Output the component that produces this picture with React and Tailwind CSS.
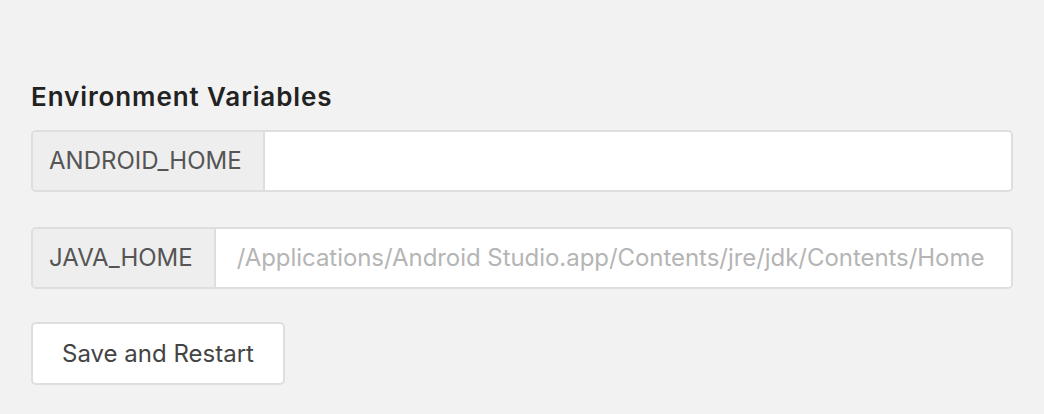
export default function App() {
  const font = { fontFamily: 'Inter, "Noto Sans", sans-serif' };
  return (
    <div className="min-h-[414px] w-full bg-[#f2f2f2] pl-[31px] pr-[31px] pt-[80px]" style={font}>
      <h2 className="text-[26px] leading-[34px] font-semibold tracking-[0.9px] text-[#222222] mb-[16px]">Environment Variables</h2>
      <div className="flex h-[62px] w-full rounded-[5px] border-2 border-[#dedede] bg-white overflow-hidden">
        <div className="flex items-center bg-[#eeeeee] border-r-2 border-[#dedede] pl-[16px] pr-[21px] text-[24px] text-[#555555]">ANDROID_HOME</div>
        <input className="flex-1 min-w-0 px-[21px] text-[24px] text-[#555555] outline-none bg-white" />
      </div>
      <div className="mt-[35px] flex h-[62px] w-full rounded-[5px] border-2 border-[#dedede] bg-white overflow-hidden">
        <div className="flex items-center bg-[#eeeeee] border-r-2 border-[#dedede] pl-[16px] pr-[21px] text-[24px] text-[#555555]">JAVA_HOME</div>
        <input
          className="flex-1 min-w-0 px-[21px] text-[24px] tracking-[-0.05px] text-[#555555] outline-none bg-white placeholder:text-[#b5b5b5]"
          placeholder="/Applications/Android Studio.app/Contents/jre/jdk/Contents/Home"
        />
      </div>
      <button className="mt-[33px] h-[63px] w-[254px] rounded-[5px] border-2 border-[#dedede] bg-white text-[24px] text-[#444444]">Save and Restart</button>
    </div>
  );
}
